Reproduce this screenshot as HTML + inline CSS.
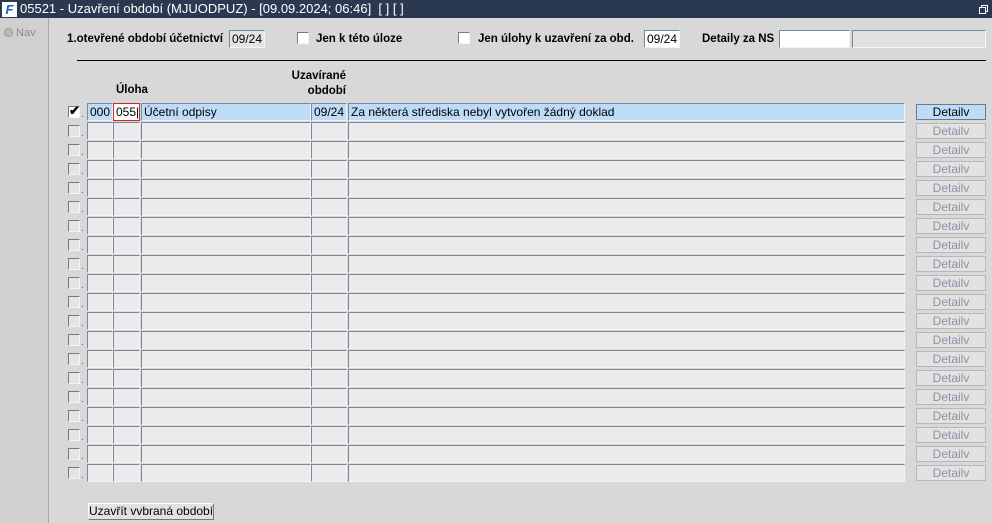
<!DOCTYPE html>
<html><head><meta charset="utf-8"><style>
*{margin:0;padding:0;box-sizing:border-box}
html,body{width:992px;height:523px;overflow:hidden}
body{background:#d8d8d8;font-family:"Liberation Sans",Arial,sans-serif;font-size:12px;position:relative;color:#000}
.a{position:absolute}
.t{top:0;left:0;width:992px;height:18px;background:#2a3850;color:#fff;font-size:13px;line-height:18px;padding-left:20px;white-space:nowrap}
.lp{top:18px;left:0;width:49px;height:505px;background:#d0d0d0;border-right:1px solid #a8a8a8}
.f{position:absolute;height:18px;background:#ebebeb;border:1px solid #d8d8d8;border-top-color:#7887a0;border-left-color:#7887a0;border-right-color:#f4f4f4;border-bottom-color:#f4f4f4;font-size:12px;line-height:16px;padding-left:2px;white-space:nowrap;overflow:hidden}
.s{background:#bcdcf8}
.cb{position:absolute;width:12px;height:12px;background:#e4e4e4;border:1px solid #7a7a7a;border-right-color:#f4f4f4;border-bottom-color:#f4f4f4}
.b{position:absolute;left:916px;width:70px;height:16px;border:1px solid #b8b8b8;background:#e2e2e2;color:#8a94a4;text-align:center;font-size:12px;line-height:14px}
.lb{font-weight:bold;font-size:11.5px;white-space:nowrap}
</style></head><body>
<div class="a t">05521 - Uzavření období (MJUODPUZ) - [09.09.2024; 06:46] &nbsp;[ ] [ ]</div>
<div class="a" style="left:2px;top:2px;width:15px;height:15px;background:#fff;color:#1b5fc4;font:bold italic 13px 'Liberation Sans';line-height:15px;text-align:center">F</div>
<div class="a" style="left:981px;top:5px;width:7px;height:7px;border:1px solid #fff"></div>
<div class="a" style="left:979px;top:7px;width:7px;height:7px;border:1px solid #fff;background:#2a3850"></div>
<div class="a lp"></div>
<div class="a" style="left:4px;top:27px;color:#8a8a8a;font-size:11px"><span style="display:inline-block;width:9px;height:9px;border-radius:50%;background:#bbb;border:1px solid #999;vertical-align:-1px"></span> Nav</div>
<div class="a lb" style="left:67px;top:33px">1.otevřené období účetnictví</div>
<div class="f" style="left:229px;top:30px;width:36px;height:18px;background:#e4e4e4">09/24</div>
<div class="cb" style="left:297px;top:32px;background:#fff"></div>
<div class="a lb" style="left:316px;top:33px">Jen k této úloze</div>
<div class="cb" style="left:458px;top:32px;background:#fff"></div>
<div class="a lb" style="left:478px;top:33px">Jen úlohy k uzavření za obd.</div>
<div class="f" style="left:644px;top:30px;width:36px;height:18px;background:#fff">09/24</div>
<div class="a lb" style="left:702px;top:33px">Detaily za NS</div>
<div class="f" style="left:779px;top:30px;width:71px;height:18px;background:#fff"></div>
<div class="f" style="left:852px;top:30px;width:134px;height:18px;background:#e0e0e0"></div>
<div class="a" style="left:77px;top:60px;width:909px;height:1px;background:#000"></div>
<div class="a lb" style="left:116px;top:84px">Úloha</div>
<div class="a lb" style="left:280px;top:69px;text-align:right;width:66px;line-height:15px">Uzavírané<br>období</div>
<div id="rows"></div>
<div class="a" style="left:88px;top:503px;width:126px;height:17px;border:1px solid #777;border-top-color:#fff;border-left-color:#fff;background:#e2e2e2;font-size:12px;line-height:15px;text-align:center;white-space:nowrap">Uzavřít vvbraná období</div>
<script>
var h='';
for(var i=0;i<20;i++){var y=103+i*19;var s=i==0?' s':'';
h+='<div class="cb" style="left:68px;top:'+(y+3)+'px;'+(i==0?'background:#fff':'')+'">'+(i==0?'<span style="position:absolute;left:0;top:-4px;font-size:13px;font-weight:bold">✔</span>':'')+'</div>';
h+='<div class="a" style="left:81px;top:'+(y+6)+'px;font-size:10px;color:#555">.</div>';
h+='<div class="f'+s+'" style="left:87px;top:'+y+'px;width:26px">'+(i==0?'000':'')+'</div>';
h+='<div class="f" style="left:113px;top:'+y+'px;width:27px;'+(i==0?'background:#fff;border:1px solid #e02020':'')+'">'+(i==0?'055|':'')+'</div>';
h+='<div class="f'+s+'" style="left:141px;top:'+y+'px;width:170px">'+(i==0?'Účetní odpisy':'')+'</div>';
h+='<div class="f'+s+'" style="left:311px;top:'+y+'px;width:36px">'+(i==0?'09/24':'')+'</div>';
h+='<div class="f'+s+'" style="left:348px;top:'+y+'px;width:557px">'+(i==0?'Za některá střediska nebyl vytvořen žádný doklad':'')+'</div>';
h+='<div class="b" style="top:'+(y+1)+'px;'+(i==0?'background:#bcdcf8;color:#000;border-color:#6a7a90':'')+'">Detailv</div>';}
document.getElementById('rows').innerHTML=h;
</script>
</body></html>
